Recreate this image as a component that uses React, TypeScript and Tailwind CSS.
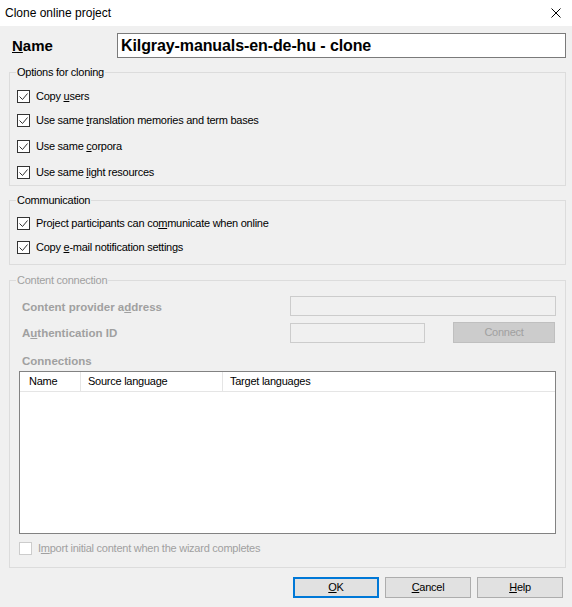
import React from "react";

type CheckProps = { checked?: boolean; disabled?: boolean };

const Check = ({ checked, disabled }: CheckProps) => (
  <span
    className={
      disabled
        ? "w-[13px] h-[13px] border border-[#cccccc] bg-white flex items-center justify-center shrink-0"
        : "w-[13px] h-[13px] border border-[#333333] bg-white flex items-center justify-center shrink-0"
    }
  >
    {checked && (
      <svg width="11" height="11" viewBox="0 0 11 11">
        <path d="M1.5 5.5 L4.5 8.5 L9.5 2.5" stroke="#333333" strokeWidth="1" fill="none" />
      </svg>
    )}
  </span>
);

const Row = ({ h, children }: { h: string; children: React.ReactNode }) => (
  <div className={`flex items-center gap-[6px] ${h}`}>{children}</div>
);

const Btn = ({ children, primary }: { children: React.ReactNode; primary?: boolean }) => (
  <button
    className={
      primary
        ? "w-[86px] h-[21px] border-2 border-[#0078d7] bg-[#e1e1e1] flex items-center justify-center"
        : "w-[86px] h-[21px] border border-[#adadad] bg-[#e1e1e1] flex items-center justify-center"
    }
  >
    {children}
  </button>
);

export default function App() {
  return (
    <div className="w-[572px] h-[607px] bg-[#f0f0f0] flex flex-col text-[11px] tracking-[-0.25px] text-black font-['Liberation_Sans',Arial,sans-serif] overflow-hidden">
      {/* title bar */}
      <div className="h-[26px] bg-white flex items-center justify-between pl-[5px] pr-[11px] text-[12px] tracking-normal shrink-0">
        <span>Clone online project</span>
        <svg width="10" height="10" viewBox="0 0 10 10">
          <path d="M0.5 0.5 L9.5 9.5 M9.5 0.5 L0.5 9.5" stroke="#000" strokeWidth="1" />
        </svg>
      </div>

      <div className="flex flex-col pl-[9px] pr-[6px]">
        {/* name */}
        <div className="mt-[7px] h-[25px] flex items-center">
          <span className="w-[108px] pl-[3px] pt-[1px] font-bold text-[15px] tracking-normal">
            <u>N</u>ame
          </span>
          <div className="flex-1 h-[25px] border border-[#7a7a7a] bg-white pl-[3px] flex items-center font-bold text-[16px] tracking-[-0.1px]">
            Kilgray-manuals-en-de-hu - clone
          </div>
        </div>

        {/* options */}
        <fieldset className="mt-[7px] border border-[#dcdcdc]">
          <legend className="ml-[6px] px-[1px] leading-[14px]">Options for cloning</legend>
          <div className="pl-[7px] pt-[5px] pb-[1px] flex flex-col">
            <Row h="h-[24px]">
              <Check checked />
              <span>Copy <u>u</u>sers</span>
            </Row>
            <Row h="h-[24px]">
              <Check checked />
              <span>Use same <u>t</u>ranslation memories and term bases</span>
            </Row>
            <Row h="h-[28px]">
              <Check checked />
              <span>Use same <u>c</u>orpora</span>
            </Row>
            <Row h="h-[24px]">
              <Check checked />
              <span>Use same <u>l</u>ight resources</span>
            </Row>
          </div>
        </fieldset>

        {/* communication */}
        <fieldset className="mt-[7px] border border-[#dcdcdc]">
          <legend className="ml-[6px] px-[1px] leading-[14px]">Communication</legend>
          <div className="pl-[7px] pt-[4px] pb-[4px] flex flex-col">
            <Row h="h-[24px]">
              <Check checked />
              <span>Project participants can co<u>m</u>municate when online</span>
            </Row>
            <Row h="h-[25px]">
              <Check checked />
              <span>Copy <u>e</u>-mail notification settings</span>
            </Row>
          </div>
        </fieldset>

        {/* content connection */}
        <fieldset className="mt-[8px] border border-[#dcdcdc] text-[#a0a0a0]">
          <legend className="ml-[6px] px-[1px] leading-[14px]">Content connection</legend>
          <div className="px-[9px] pb-[12px] flex flex-col">
            <div className="mt-[9px] h-[20px] flex items-center">
              <span className="flex-1 pl-[3px] pt-[3px] font-bold text-[11.5px] tracking-normal">
                Content provider a<u>d</u>dress
              </span>
              <div className="w-[266px] h-[20px] border border-[#cccccc]" />
            </div>
            <div className="mt-[6px] h-[21px] flex items-center">
              <span className="flex-1 pl-[3px] pt-[3px] font-bold text-[11.5px] tracking-normal">
                A<u>u</u>thentication ID
              </span>
              <div className="w-[135px] h-[20px] border border-[#cccccc]" />
              <div className="ml-[28px] mr-[1px] w-[102px] h-[21px] border border-[#bfbfbf] bg-[#cccccc] flex items-center justify-center">
                Connect
              </div>
            </div>
            <div className="mt-[11px] pl-[3px] leading-[14px] font-bold text-[11.5px] tracking-normal">
              Connections
            </div>
            <div className="mt-[3px] h-[163px] border border-[#828282] bg-white flex flex-col text-black">
              <div className="h-[20px] border-b border-[#e5e5e5] flex">
                <div className="w-[61px] border-r border-[#e5e5e5] pl-[9px] flex items-center">Name</div>
                <div className="w-[142px] border-r border-[#e5e5e5] pl-[7px] flex items-center">
                  Source language
                </div>
                <div className="flex-1 pl-[7px] flex items-center">Target languages</div>
              </div>
            </div>
            <div className="mt-[7px] h-[14px] flex items-center gap-[6px]">
              <Check disabled />
              <span>
                I<u>m</u>port initial content when the wizard completes
              </span>
            </div>
          </div>
        </fieldset>

        {/* buttons */}
        <div className="mt-[9px] pr-[3px] flex justify-end gap-[6px]">
          <Btn primary>
            <span><u>O</u>K</span>
          </Btn>
          <Btn>
            <span><u>C</u>ancel</span>
          </Btn>
          <Btn>
            <span><u>H</u>elp</span>
          </Btn>
        </div>
      </div>
    </div>
  );
}
